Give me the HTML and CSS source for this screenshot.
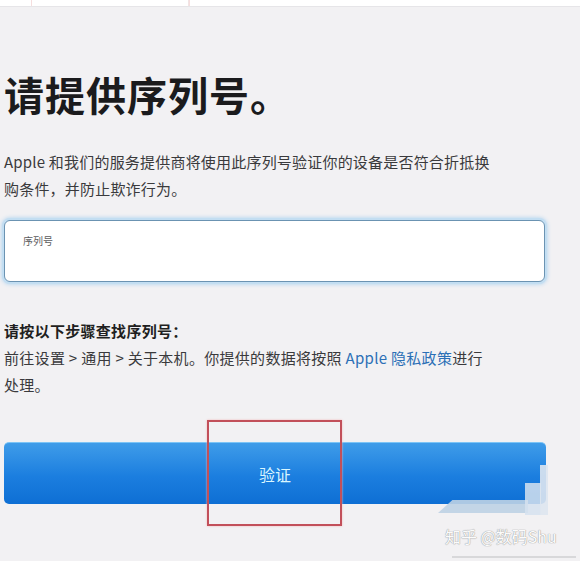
FILE: index.html
```html
<!DOCTYPE html>
<html lang="zh-CN">
<head>
  <meta charset="UTF-8" />
  <meta name="viewport" content="width=device-width, initial-scale=1" />
  <title>请提供序列号</title>
  <link rel="stylesheet" href="styles.css">
</head>
<body>
  <div class="topbar">
    <div class="tab tab-a"></div>
    <div class="tab tab-b"></div>
  </div>

  <div class="container">
    <h1>请提供序列号。</h1>
    <p class="intro">
      Apple 和我们的服务提供商将使用此序列号验证你的设备是否符合折抵换购条件，并防止欺诈行为。
    </p>

    <div class="field">
      <label for="serial">序列号</label>
      <input type="text" id="serial">
    </div>

    <div class="steps">
      <p class="steps-title">请按以下步骤查找序列号：</p>
      <p>前往设置 &gt; 通用 &gt; 关于本机。你提供的数据将按照 <a href="#">Apple 隐私政策</a>进行处理。</p>
    </div>

    <button class="verify">验证</button>
  </div>

  <!-- marks laid over the screenshot -->
  <div class="highlight"></div>
  <div class="ghost ghost-bar"></div>
  <div class="ghost ghost-block"></div>
  <div class="ghost ghost-col"></div>
  <div class="watermark">知乎 @数码Shu</div>
  <div class="watermark-line"></div>
</body>
</html>
```

FILE: styles.css
```css
body {
  margin: 0;
  width: 580px;
  height: 561px;
  overflow: hidden;
  position: relative;
  background-color: #f2f1f3;
  font-family: "Noto Sans CJK SC", "Liberation Sans", sans-serif;
  color: #3a3a3c;
}
.topbar {
  height: 6px;
  background: #fff;
  border-bottom: 1px solid #e6e5e8;
  display: flex;
}
.tab {
  height: 6px;
  border-left: 1px solid #f6dede;
}
.tab-a {
  margin-left: 31px;
  width: 156px;
  border-right: 1px solid #f1e4e4;
}
.container {
  padding: 0 35px 0 4px;
}
h1 {
  margin: 63px 0 0;
  font-size: 40px;
  line-height: 48px;
  font-weight: bold;
  color: #1b1b1d;
  letter-spacing: 1px;
}
.intro {
  margin: 30px 0 0;
  font-size: 15px;
  line-height: 27px;
  letter-spacing: 0.2px;
  width: 500px;
}
.field {
  margin-top: 18px;
  height: 62px;
  box-sizing: border-box;
  background: #fff;
  border: 1px solid #6b93b2;
  border-radius: 6px;
  box-shadow: 0 0 0 2px #c3def2, 0 0 4px 2px #a9d0ee;
  padding: 0 18px;
  display: flex;
  flex-direction: column;
}
.field label {
  font-size: 10px;
  color: #5c5c5e;
  margin-top: 13px;
  line-height: 14px;
}
.field input {
  border: none;
  outline: none;
  background: transparent;
  font-size: 15px;
  padding: 0;
}
.steps {
  margin-top: 35px;
  font-size: 15px;
  line-height: 27px;
}
.steps p {
  margin: 0;
  width: 492px;
  letter-spacing: 0.3px;
}
.steps .steps-title {
  font-weight: bold;
  color: #1f1f21;
}
.steps a {
  color: #2b6fb6;
  text-decoration: none;
}
.verify {
  display: block;
  margin-top: 44px;
  width: 542px;
  height: 62px;
  border: none;
  border-top: 1px solid #7cc4f6;
  border-radius: 5px;
  background: linear-gradient(#3f9ce9, #1b7edf 55%, #0e6fd4);
  color: #d9f6ff;
  font-family: "Noto Sans CJK SC", serif;
  font-size: 16px;
}
.highlight {
  position: absolute;
  left: 207px;
  top: 420px;
  width: 131px;
  height: 102px;
  border: 2px solid #c2505a;
  box-shadow: 0 0 2px #f1b6b8;
}
.ghost {
  position: absolute;
}
.ghost-bar {
  left: 438px;
  top: 500px;
  width: 90px;
  height: 13px;
  background: rgba(190, 210, 228, 0.9);
  clip-path: polygon(16% 0, 100% 0, 100% 100%, 0 100%);
}
.ghost-block {
  left: 525px;
  top: 483px;
  width: 16px;
  height: 32px;
  background: rgba(214, 226, 238, 0.85);
}
.ghost-col {
  left: 540px;
  top: 465px;
  width: 8px;
  height: 50px;
  background: rgba(222, 230, 240, 0.9);
}
.watermark {
  position: absolute;
  left: 445px;
  top: 525px;
  font-size: 16px;
  line-height: 22px;
  color: #fbfbfb;
  text-shadow: 0 0 1px #9a9a9a, 0 0 1px #9a9a9a;
}
.watermark-line {
  position: absolute;
  left: 452px;
  top: 556px;
  width: 124px;
  height: 2px;
  background: #d8d8da;
}
```
